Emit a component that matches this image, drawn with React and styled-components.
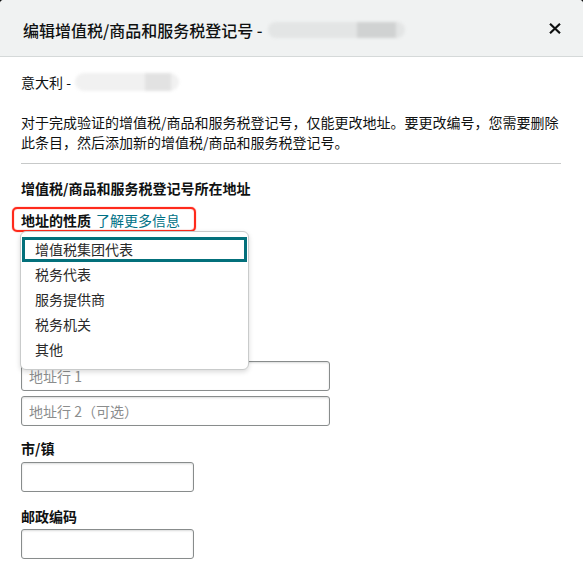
import React from "react";
import styled, { createGlobalStyle } from "styled-components";

const GlobalStyle = createGlobalStyle`
  html, body {
    margin: 0;
    padding: 0;
    background: #0f1111;
  }
  body {
    font-family: "Noto Sans CJK SC", "Noto Sans", "Liberation Sans", sans-serif;
    color: #0f1111;
    font-size: 14px;
  }
  * { box-sizing: border-box; }
`;

const Modal = styled.div`
  min-height: 100vh;
  background: #ffffff;
  border-radius: 4px 4px 0 0;
  overflow: hidden;
`;

const Header = styled.header`
  height: 57px;
  display: flex;
  align-items: center;
  justify-content: space-between;
  padding: 4px 21px 0 23px;
  background: #f0f2f2;
  border-bottom: 1px solid #d5d9d9;
`;

const Title = styled.h4`
  margin: 0;
  display: flex;
  align-items: center;
  font-size: 16px;
  font-weight: 500;
  line-height: 22px;
  color: #0f1111;
`;

const Redacted = styled.span`
  position: relative;
  display: inline-block;
  flex: none;
  width: ${(p) => p.$w}px;
  height: ${(p) => p.$h}px;
  margin-left: ${(p) => p.$ml}px;
  border-radius: ${(p) => p.$h / 2}px;
  background: linear-gradient(
    to right,
    ${(p) => p.$light} 0,
    ${(p) => p.$light} ${(p) => p.$d1}px,
    ${(p) => p.$dark} ${(p) => p.$d1}px,
    ${(p) => p.$dark} ${(p) => p.$d2}px,
    ${(p) => p.$light} ${(p) => p.$d2}px
  );
  filter: blur(1.5px);
`;

const CloseButton = styled.button`
  width: 14px;
  height: 14px;
  padding: 0;
  border: none;
  background: transparent;
  display: flex;
  align-items: center;
  justify-content: center;
  cursor: pointer;
  margin-top: -3px;
`;

const Body = styled.div`
  padding: 15px 22px 0 21px;
  display: flex;
  flex-direction: column;
`;

const Country = styled.div`
  display: flex;
  align-items: center;
  line-height: 20px;
  font-size: 14px;
`;

const Notice = styled.p`
  margin: 20px 0 0;
  font-size: 14px;
  line-height: 20px;
`;

const Divider = styled.hr`
  margin: 11px 0 0;
  border: none;
  border-top: 1px solid #c7c9c9;
  height: 0;
`;

const SectionHeading = styled.h5`
  margin: 14px 0 0;
  font-size: 14px;
  font-weight: 700;
  line-height: 20px;
`;

const LabelBox = styled.div`
  align-self: flex-start;
  display: inline-flex;
  align-items: center;
  margin: 9px 0 0 -9px;
  padding: 1px 14px 0 7px;
  height: 25px;
  border: 2px solid #ff2a1c;
  border-radius: 5px;
  box-shadow: 0 0 1px #ff2a1c, inset 0 0 1px #ff2a1c;
  line-height: 20px;
`;

const FieldLabel = styled.label`
  font-size: 14px;
  font-weight: 700;
  line-height: 20px;
`;

const HelpLink = styled.a`
  margin-left: 5px;
  color: #007185;
  text-decoration: none;
  font-size: 14px;
  line-height: 20px;
`;

const SelectSlot = styled.div`
  position: relative;
  height: 129px;
`;

const SelectTrigger = styled.div`
  margin-top: 3px;
  width: 200px;
  height: 30px;
  border: 1px solid #d5d9d9;
  border-radius: 8px;
  background: #f0f2f2;
`;

const Listbox = styled.ul`
  position: absolute;
  top: -1px;
  left: -1px;
  z-index: 2;
  width: 229px;
  margin: 0;
  padding: 5px 1px 7px;
  list-style: none;
  background: #ffffff;
  border: 1px solid #c9cbcb;
  border-radius: 6px;
  box-shadow: 0 2px 5px rgba(0, 0, 0, 0.15);
`;

const Option = styled.li`
  height: 25px;
  line-height: ${(p) => (p.$selected ? 19 : 25)}px;
  padding-left: ${(p) => (p.$selected ? 10 : 13)}px;
  font-size: 14px;
  color: #2a2a2a;
  border: ${(p) => (p.$selected ? "3px solid #03707b" : "none")};
`;

const InputStack = styled.div`
  display: flex;
  flex-direction: column;
  gap: 5px;
`;

const TextInput = styled.input`
  width: ${(p) => p.$w}px;
  height: 30px;
  padding: 0 7px;
  border: 1px solid #888c8c;
  border-radius: 3px;
  box-shadow: inset 0 1px 2px rgba(15, 17, 17, 0.15);
  font-family: "Noto Sans CJK SC", "Noto Sans", sans-serif;
  font-size: 14px;
  color: #0f1111;
  outline: none;
  background: #fff;
  &::placeholder {
    color: #8b8d8d;
  }
`;

const Field = styled.div`
  display: flex;
  flex-direction: column;
  gap: ${(p) => p.$gap}px;
  margin-top: ${(p) => p.$mt}px;
`;

const options = ["增值税集团代表", "税务代表", "服务提供商", "税务机关", "其他"];

export default function App() {
  return (
    <>
      <GlobalStyle />
      <Modal>
        <Header>
          <Title>
            编辑增值税/商品和服务税登记号 -
            <Redacted $w={137} $h={16} $ml={5} $light="#e3e5e5" $dark="#d0d2d2" $d1={89} $d2={128} />
          </Title>
          <CloseButton aria-label="关闭">
            <svg width="12" height="11" viewBox="0 0 12 11">
              <path d="M1 0.8 L11 10.2 M11 0.8 L1 10.2" stroke="#0f1111" strokeWidth="2.2" fill="none" />
            </svg>
          </CloseButton>
        </Header>
        <Body>
          <Country>
            意大利 -
            <Redacted $w={104} $h={18} $ml={4} $light="#f1f1f1" $dark="#e2e2e2" $d1={70} $d2={96} />
          </Country>
          <Notice>
            对于完成验证的增值税/商品和服务税登记号，仅能更改地址。要更改编号，您需要删除此条目，然后添加新的增值税/商品和服务税登记号。
          </Notice>
          <Divider />
          <SectionHeading>增值税/商品和服务税登记号所在地址</SectionHeading>
          <LabelBox>
            <FieldLabel>地址的性质</FieldLabel>
            <HelpLink href="#">了解更多信息</HelpLink>
          </LabelBox>
          <SelectSlot>
            <SelectTrigger />
            <Listbox role="listbox">
              {options.map((o, i) => (
                <Option key={o} $selected={i === 0} role="option">
                  {o}
                </Option>
              ))}
            </Listbox>
          </SelectSlot>
          <InputStack>
            <TextInput $w={309} placeholder="地址行 1" />
            <TextInput $w={309} placeholder="地址行 2（可选）" />
          </InputStack>
          <Field $mt={12} $gap={4}>
            <FieldLabel>市/镇</FieldLabel>
            <TextInput $w={173} />
          </Field>
          <Field $mt={14} $gap={3}>
            <FieldLabel>邮政编码</FieldLabel>
            <TextInput $w={173} />
          </Field>
        </Body>
      </Modal>
    </>
  );
}
